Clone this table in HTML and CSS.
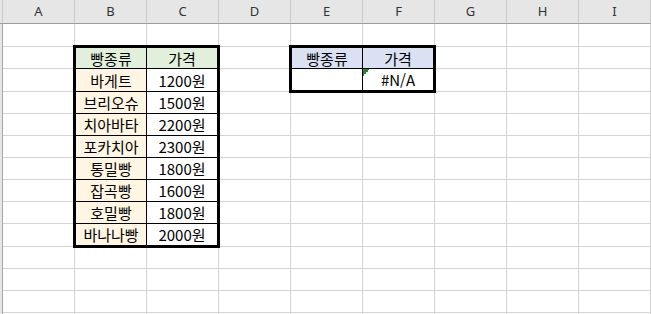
FILE: index.html
```html
<!DOCTYPE html>
<html lang="ko">
<head>
<meta charset="utf-8">
<title>빵 가격표</title>
<link rel="stylesheet" href="styles.css">
</head>
<body>
<div class="sheet">
  <div class="colhead">
    <div class="corner"></div>
    <div class="h">A</div><div class="h">B</div><div class="h">C</div>
    <div class="h">D</div><div class="h">E</div><div class="h">F</div>
    <div class="h">G</div><div class="h">H</div><div class="h">I</div>
  </div>
  <div class="body">
    <div class="rowstub"></div>
    <div class="grid">
      <!-- row 1 -->
      <div class="c"></div><div class="c"></div><div class="c"></div><div class="c"></div><div class="c"></div><div class="c"></div><div class="c"></div><div class="c"></div><div class="c"></div>
      <!-- rows 2-3: A, D, G, H, I around the two tables -->
      <div class="c"></div><div class="c"></div><div class="c"></div><div class="c"></div><div class="c"></div>
      <div class="c"></div><div class="c"></div><div class="c"></div><div class="c"></div><div class="c"></div>
      <!-- rows 4-10: everything right of the bread table -->
      <div class="c"></div><div class="c"></div><div class="c"></div><div class="c"></div><div class="c"></div><div class="c"></div><div class="c"></div>
      <div class="c"></div><div class="c"></div><div class="c"></div><div class="c"></div><div class="c"></div><div class="c"></div><div class="c"></div>
      <div class="c"></div><div class="c"></div><div class="c"></div><div class="c"></div><div class="c"></div><div class="c"></div><div class="c"></div>
      <div class="c"></div><div class="c"></div><div class="c"></div><div class="c"></div><div class="c"></div><div class="c"></div><div class="c"></div>
      <div class="c"></div><div class="c"></div><div class="c"></div><div class="c"></div><div class="c"></div><div class="c"></div><div class="c"></div>
      <div class="c"></div><div class="c"></div><div class="c"></div><div class="c"></div><div class="c"></div><div class="c"></div><div class="c"></div>
      <div class="c"></div><div class="c"></div><div class="c"></div><div class="c"></div><div class="c"></div><div class="c"></div><div class="c"></div>
      <!-- rows 11-14 -->
      <div class="c"></div><div class="c"></div><div class="c"></div><div class="c"></div><div class="c"></div><div class="c"></div><div class="c"></div><div class="c"></div><div class="c"></div>
      <div class="c"></div><div class="c"></div><div class="c"></div><div class="c"></div><div class="c"></div><div class="c"></div><div class="c"></div><div class="c"></div><div class="c"></div>
      <div class="c"></div><div class="c"></div><div class="c"></div><div class="c"></div><div class="c"></div><div class="c"></div><div class="c"></div><div class="c"></div><div class="c"></div>
      <div class="c"></div><div class="c"></div><div class="c"></div><div class="c"></div><div class="c"></div><div class="c"></div><div class="c"></div><div class="c"></div><div class="c"></div>

      <!-- B2:C10 price list -->
      <div class="tbl prices">
        <div class="cell head-green">빵종류</div><div class="cell head-green">가격</div>
        <div class="cell name">바게트</div><div class="cell">1200원</div>
        <div class="cell name">브리오슈</div><div class="cell">1500원</div>
        <div class="cell name">치아바타</div><div class="cell">2200원</div>
        <div class="cell name">포카치아</div><div class="cell">2300원</div>
        <div class="cell name">통밀빵</div><div class="cell">1800원</div>
        <div class="cell name">잡곡빵</div><div class="cell">1600원</div>
        <div class="cell name">호밀빵</div><div class="cell">1800원</div>
        <div class="cell name">바나나빵</div><div class="cell">2000원</div>
      </div>

      <!-- E2:F3 lookup -->
      <div class="tbl lookup">
        <div class="cell head-blue">빵종류</div><div class="cell head-blue">가격</div>
        <div class="cell"></div><div class="cell err">#N/A</div>
      </div>
    </div>
  </div>
</div>
</body>
</html>
```

FILE: styles.css
```css
html, body {
  margin: 0;
  padding: 0;
  background: #fff;
}

body {
  width: 651px;
  height: 314px;
  overflow: hidden;
}

.sheet {
  display: flex;
  flex-direction: column;
  width: 651px;
  height: 314px;
  overflow: hidden;
}

/* column letters */
.colhead {
  display: grid;
  grid-template-columns: 2px repeat(9, 71px);
  column-gap: 1px;
  height: 23px;
  flex: none;
  background: #cacaca;
  border-right: 1px solid #cacaca;
  border-bottom: 1px solid #9c9c9c;
}

.corner,
.h {
  background: #e6e6e6;
}

.h {
  display: flex;
  align-items: center;
  justify-content: center;
  font-family: "Noto Sans", "Open Sans", sans-serif;
  font-size: 13px;
  color: #333;
  line-height: 1;
}

/* cell area */
.body {
  display: flex;
  height: 290px;
  flex: none;
  overflow: hidden;
}

.rowstub {
  width: 2px;
  background: #e6e6e6;
  border-right: 1px solid #a6a6a6;
}

.grid {
  display: grid;
  grid-template-columns: repeat(9, 71px);
  grid-template-rows: 22px 21px 22px 21px 21px 21px 21px 21px 21px 22px 21px 21px 21px 21px;
  gap: 1px;
  background: #d4d4d4;
  border-right: 1px solid #d4d4d4;
  align-content: start;
}

.c {
  background: #fff;
}

/* bordered ranges: thick outline sits centred on the gridlines */
.tbl {
  margin: -2px;
  border: 3px solid #000;
  display: grid;
  grid-template-columns: 70px 70px;
  gap: 1px;
  background: #000;
}

.prices {
  grid-column: 2 / 4;
  grid-row: 2 / 11;
  grid-template-rows: 20px 22px repeat(7, 21px);
}

.lookup {
  grid-column: 5 / 7;
  grid-row: 2 / 4;
  grid-template-rows: 20px 21px;
}

.cell {
  display: flex;
  align-items: center;
  justify-content: center;
  background: #fff;
  font-family: "Noto Sans CJK KR", "Noto Sans", sans-serif;
  font-size: 15px;
  line-height: 1;
  color: #000;
}

.head-green {
  background: #e2efda;
}

.head-blue {
  background: #d9e1f2;
}

.name {
  background: #fff5e3;
}

/* green error marker in the top-left corner */
.err {
  background:
    linear-gradient(135deg, #1f8a2e 0 50%, transparent 50%) top left / 7px 7px no-repeat,
    #fff;
}
```
